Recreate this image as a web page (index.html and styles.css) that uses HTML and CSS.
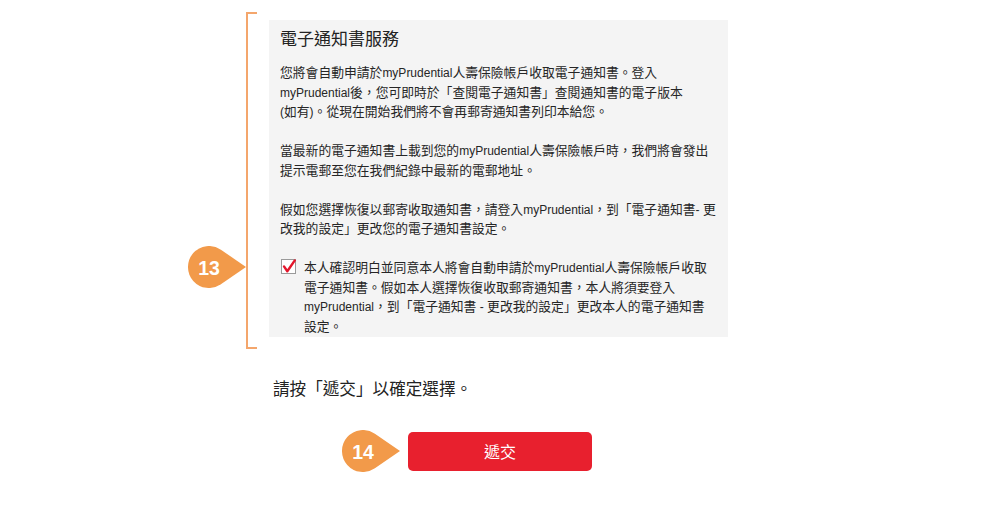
FILE: index.html
```html
<!DOCTYPE html>
<html lang="zh-Hant">
<head>
<meta charset="utf-8">
<title>電子通知書服務</title>
<link rel="stylesheet" href="styles.css">
</head>
<body>
<div class="page">
  <div class="section">
    <div class="marker marker-13">
      <svg class="pin" width="58" height="42" viewBox="0 0 58 42">
        <path d="M58 21 L32.9 3.7 A21 21 0 1 0 32.9 38.3 Z" fill="#f29a4a"/>
        <text x="21" y="28.5" text-anchor="middle" class="pin-text">13</text>
      </svg>
    </div>
    <div class="bracket"></div>
    <div class="card">
      <h2 class="card-title">電子通知書服務</h2>
      <p class="para">您將會自動申請於<span class="en">myPrudential</span>人壽保險帳戶收取電子通知書。登入<br><span class="en">myPrudential</span>後，您可即時於「查閱電子通知書」查閱通知書的電子版本<br><span class="en">(</span>如有<span class="en">)</span>。從現在開始我們將不會再郵寄通知書列印本給您。</p>
      <p class="para">當最新的電子通知書上載到您的<span class="en">myPrudential</span>人壽保險帳戶時，我們將會發出<br>提示電郵至您在我們紀錄中最新的電郵地址。</p>
      <p class="para">假如您選擇恢復以郵寄收取通知書，請登入<span class="en">myPrudential</span>，到「電子通知書<span class="en">- </span>更<br>改我的設定」更改您的電子通知書設定。</p>
      <div class="agree">
        <svg class="checkbox" width="17" height="17" viewBox="0 0 17 17">
          <rect x="0.5" y="1.5" width="14" height="14" fill="#fff" stroke="#9a9a9a"/>
          <path d="M3 8.4 L6.3 13.2 L13.8 2.4" fill="none" stroke="#e3162b" stroke-width="2.4" stroke-linecap="round" stroke-linejoin="round"/>
        </svg>
        <p class="para agree-text">本人確認明白並同意本人將會自動申請於<span class="en">myPrudential</span>人壽保險帳戶收取<br>電子通知書。假如本人選擇恢復收取郵寄通知書，本人將須要登入<br><span class="en">myPrudential</span>，到「電子通知書<span class="en"> - </span>更改我的設定」更改本人的電子通知書<br>設定。</p>
      </div>
    </div>
  </div>

  <p class="prompt">請按「遞交」以確定選擇。</p>

  <div class="submit-row">
    <div class="marker">
      <svg class="pin" width="58" height="42" viewBox="0 0 58 42">
        <path d="M58 21 L32.9 3.7 A21 21 0 1 0 32.9 38.3 Z" fill="#f29a4a"/>
        <text x="21" y="28.5" text-anchor="middle" class="pin-text">14</text>
      </svg>
    </div>
    <button class="submit" type="button">遞交</button>
  </div>
</div>
</body>
</html>
```

FILE: styles.css
```css
* { box-sizing: border-box; }

html, body {
  margin: 0;
  padding: 0;
  background: #ffffff;
}

body {
  font-family: "Noto Sans CJK TC", "Liberation Sans", sans-serif;
  color: #262626;
  width: 1000px;
  height: 526px;
  overflow: hidden;
}

.page {
  padding-top: 12px;
}

.section {
  display: flex;
  align-items: flex-start;
  margin-left: 188px;
}

.marker {
  width: 58px;
  height: 42px;
  flex: none;
}

.marker-13 {
  margin-top: 234px;
}

.pin {
  display: block;
}

.pin-text {
  font-family: "Liberation Sans", Arial, sans-serif;
  font-weight: bold;
  font-size: 19.5px;
  fill: #ffffff;
}

.bracket {
  flex: none;
  width: 11px;
  height: 337px;
  border: 2px solid #f4a66c;
  border-right: none;
}

.card {
  flex: none;
  width: 459px;
  height: 317px;
  margin-top: 8px;
  margin-left: 12px;
  background: #f4f4f4;
  padding: 6px 0 0 11px;
}

.card-title {
  margin: 0 0 12px;
  font-size: 17px;
  line-height: 24px;
  font-weight: normal;
  color: #222;
}

.para {
  margin: 0 0 19.5px;
  font-size: 12.8px;
  line-height: 19.5px;
  white-space: nowrap;
}

.en {
  font-family: "Liberation Sans", Arial, sans-serif;
  font-size: 12px;
  line-height: 1;
}

.agree {
  display: flex;
  align-items: flex-start;
  gap: 6px;
  padding-left: 1px;
}

.checkbox {
  flex: none;
  margin-top: 1px;
}

.agree-text {
  margin: 0;
}

.prompt {
  margin: 27px 0 0 273px;
  font-size: 16.6px;
  line-height: 24px;
  color: #222;
}

.submit-row {
  display: flex;
  align-items: center;
  margin: 30px 0 0 342px;
  gap: 8px;
}

.submit {
  width: 184px;
  height: 39px;
  border: none;
  border-radius: 5px;
  background: #e8202e;
  color: #ffffff;
  font-family: "Noto Sans CJK TC", "Liberation Sans", sans-serif;
  font-size: 16px;
  padding: 0;
  cursor: pointer;
}
```
